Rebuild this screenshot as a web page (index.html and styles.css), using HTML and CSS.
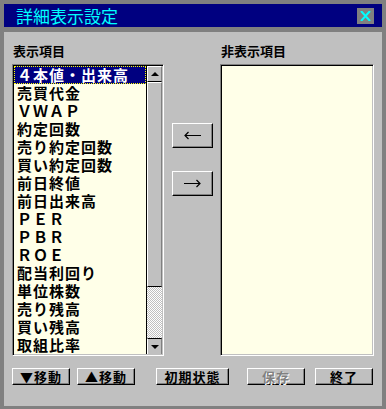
FILE: index.html
```html
<!DOCTYPE html>
<html lang="ja">
<head>
    <meta charset="UTF-8">
    <title>詳細表示設定</title>
    <link rel="stylesheet" href="styles.css">
</head>
<body>
    <div class="dialog">
        <!-- Title bar -->
        <div class="title-bar">
            <span class="title-text">詳細表示設定</span>
            <button class="close-btn">
                <svg width="11" height="10" viewBox="0 0 11 10"><path d="M1 0 L10 10 M10 0 L1 10" stroke="#00ffff" stroke-width="2" fill="none"/></svg>
            </button>
        </div>

        <div class="content">
            <div class="lists">
                <!-- Shown items -->
                <div class="column column-left">
                    <div class="label">表示項目</div>
                    <div class="listbox">
                        <ul class="items">
                            <li class="item selected">４本値・出来高</li>
                            <li class="item">売買代金</li>
                            <li class="item">ＶＷＡＰ</li>
                            <li class="item">約定回数</li>
                            <li class="item">売り約定回数</li>
                            <li class="item">買い約定回数</li>
                            <li class="item">前日終値</li>
                            <li class="item">前日出来高</li>
                            <li class="item">ＰＥＲ</li>
                            <li class="item">ＰＢＲ</li>
                            <li class="item">ＲＯＥ</li>
                            <li class="item">配当利回り</li>
                            <li class="item">単位株数</li>
                            <li class="item">売り残高</li>
                            <li class="item">買い残高</li>
                            <li class="item">取組比率</li>
                        </ul>
                        <div class="scrollbar">
                            <div class="sb-btn"><span class="tri-up"></span></div>
                            <div class="sb-thumb"></div>
                            <div class="sb-track"></div>
                            <div class="sb-btn"><span class="tri-down"></span></div>
                        </div>
                    </div>
                </div>

                <!-- Move buttons -->
                <div class="middle">
                    <button class="btn arrow-btn">
                        <svg width="17" height="9" viewBox="0 0 17 9"><path d="M1 4.5 H17 M4.5 1 L1 4.5 L4.5 8" stroke="#000" stroke-width="1.2" fill="none"/></svg>
                    </button>
                    <button class="btn arrow-btn">
                        <svg width="17" height="9" viewBox="0 0 17 9"><path d="M0 4.5 H16 M12.5 1 L16 4.5 L12.5 8" stroke="#000" stroke-width="1.2" fill="none"/></svg>
                    </button>
                </div>

                <!-- Hidden items -->
                <div class="column column-right">
                    <div class="label">非表示項目</div>
                    <div class="listbox"></div>
                </div>
            </div>

            <div class="footer">
                <button class="btn foot-btn">▼移動</button>
                <button class="btn foot-btn gap-1">▲移動</button>
                <button class="btn foot-btn wide gap-2">初期状態</button>
                <button class="btn foot-btn gap-3 disabled">保存</button>
                <button class="btn foot-btn gap-4">終了</button>
            </div>
        </div>
    </div>
</body>
</html>
```

FILE: styles.css
```css
* {
    margin: 0;
    padding: 0;
    box-sizing: border-box;
    font-family: "Noto Sans CJK JP", "Noto Sans", sans-serif;
}

body {
    background-color: #808080;
    width: 386px;
    height: 409px;
    overflow: hidden;
}

.dialog {
    padding: 4px 4px 3px 4px;
    display: flex;
    flex-direction: column;
    height: 409px;
}

/* Title bar */
.title-bar {
    height: 23px;
    background-color: #000080;
    display: flex;
    align-items: center;
    justify-content: space-between;
    padding: 0 8px 0 12px;
}

.title-text {
    color: #00ffff;
    font-size: 17px;
    line-height: 17px;
}

.close-btn {
    width: 17px;
    height: 16px;
    background-color: #808080;
    border: none;
    display: flex;
    align-items: center;
    justify-content: center;
}

/* Main area */
.content {
    margin-top: 5px;
    flex: 1;
    background-color: #c0c0c0;
    padding: 11px 8px 0 8px;
}

.lists {
    display: flex;
}

.column-left {
    width: 152px;
}

.column-right {
    width: 154px;
}

.label {
    font-size: 13px;
    font-weight: 700;
    line-height: 15px;
    height: 15px;
    margin-bottom: 6px;
    padding-left: 1px;
    color: #000;
}

.listbox {
    height: 292px;
    background-color: #ffffe8;
    border: 1px solid;
    border-color: #808080 #ffffff #ffffff #808080;
    box-shadow: inset 1px 1px 0 #000, inset -1px -1px 0 #c0c0c0;
    padding: 1px;
    display: flex;
}

.items {
    list-style: none;
    flex: 1;
}

.item {
    height: 18px;
    line-height: 18px;
    font-size: 15px;
    letter-spacing: 1px;
    font-weight: 700;
    padding-left: 3px;
    color: #000;
    white-space: nowrap;
}

.item.selected {
    background-color: #000080;
    color: #fff;
    outline: 1px dotted #ffff00;
    outline-offset: -1px;
}

/* Scrollbar */
.scrollbar {
    width: 16px;
    display: flex;
    flex-direction: column;
    border-left: 1px solid #000;
}

.sb-btn {
    height: 16px;
    background-color: #c0c0c0;
    border: 1px solid;
    border-color: #fff #808080 #808080 #fff;
    border-bottom: 1px solid #000;
    display: flex;
    align-items: center;
    justify-content: center;
}

.sb-btn:last-child {
    border-top: 1px solid #000;
    border-bottom: none;
}

.tri-up {
    width: 0;
    height: 0;
    border-left: 4px solid transparent;
    border-right: 4px solid transparent;
    border-bottom: 4px solid #000;
}

.tri-down {
    width: 0;
    height: 0;
    border-left: 4px solid transparent;
    border-right: 4px solid transparent;
    border-top: 4px solid #000;
}

.sb-thumb {
    height: 205px;
    background-color: #c0c0c0;
    border: 1px solid;
    border-color: #fff #808080 #000 #fff;
}

.sb-track {
    flex: 1;
    background-color: #c0c0c0;
    background-image: conic-gradient(#fff 25%, #c0c0c0 0 50%, #fff 0 75%, #c0c0c0 0);
    background-size: 2px 2px;
}

/* Buttons */
.btn {
    background-color: #c0c0c0;
    border: 1px solid;
    border-color: #fff #000 #000 #fff;
    box-shadow: inset -1px -1px 0 #808080;
    color: #000;
    font-weight: 700;
    font-size: 13px;
    letter-spacing: 1px;
    display: flex;
    align-items: center;
    justify-content: center;
}

.middle {
    width: 56px;
    padding: 80px 0 0 8px;
    display: flex;
    flex-direction: column;
    gap: 23px;
}

.arrow-btn {
    width: 41px;
    height: 25px;
}

.footer {
    display: flex;
    margin-top: 12px;
}

.foot-btn {
    width: 58px;
    height: 17px;
    line-height: 15px;
}

.foot-btn.wide {
    width: 73px;
}

.gap-1 {
    margin-left: 7px;
}

.gap-2 {
    margin-left: 21px;
}

.gap-3 {
    margin-left: 18px;
}

.gap-4 {
    margin-left: 10px;
}

.foot-btn.disabled {
    color: #808080;
    text-shadow: 1px 1px 0 #fff;
}
```
